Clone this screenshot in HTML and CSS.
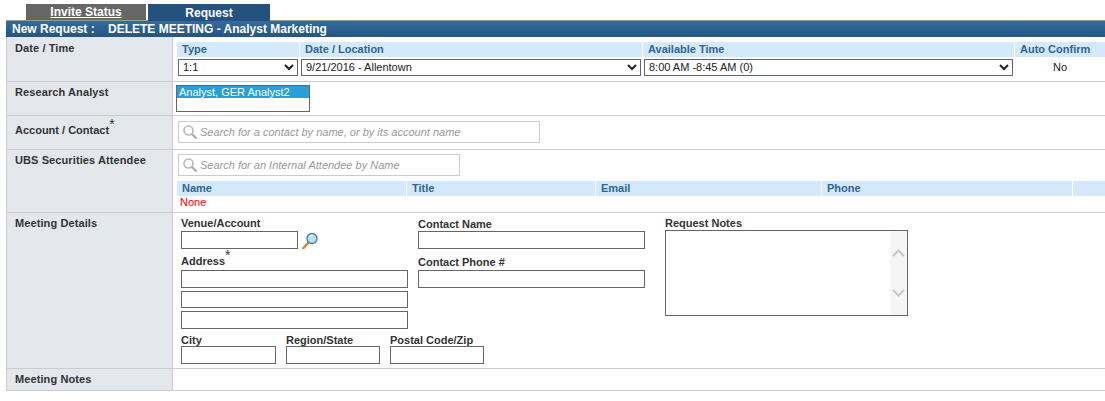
FILE: index.html
```html
<!DOCTYPE html>
<html lang="en">
<head>
  <meta charset="UTF-8">
  <title>New Request</title>
  <link rel="stylesheet" href="styles.css">
</head>
<body>
  <div class="tabs">
    <a class="tab tab-off" href="#">Invite Status</a>
    <span class="tab tab-on">Request</span>
  </div>

  <div class="panel-title">
    <span class="panel-title-left">New Request :</span>
    <span>DELETE MEETING - Analyst Marketing</span>
  </div>

  <div class="row row-date">
    <div class="label">Date / Time</div>
    <div class="cell">
      <div class="date-grid">
        <div class="col-head">Type</div>
        <div class="col-head">Date / Location</div>
        <div class="col-head">Available Time</div>
        <div class="col-head">Auto Confirm</div>
        <select class="pick"><option>1:1</option></select>
        <select class="pick"><option>9/21/2016 - Allentown</option></select>
        <select class="pick"><option>8:00 AM -8:45 AM (0)</option></select>
        <div class="auto-value">No</div>
      </div>
    </div>
  </div>

  <div class="row row-analyst">
    <div class="label">Research Analyst</div>
    <div class="cell">
      <div class="listbox"><div class="listbox-item">Analyst, GER Analyst2</div></div>
    </div>
  </div>

  <div class="row row-account">
    <div class="label">Account / Contact<sup class="req">*</sup></div>
    <div class="cell">
      <div class="search search-wide">
        <svg class="search-icon" width="16" height="16" viewBox="0 0 16 16"><circle cx="6.5" cy="6.5" r="4.5" fill="none" stroke="#b8b8b8" stroke-width="1.6"/><path d="M10 10l4.5 4.5" stroke="#b0b0b0" stroke-width="2.4"/></svg>
        <span>Search for a contact by name, or by its account name</span>
      </div>
    </div>
  </div>

  <div class="row row-attendee">
    <div class="label">UBS Securities Attendee</div>
    <div class="cell">
      <div class="search search-narrow">
        <svg class="search-icon" width="16" height="16" viewBox="0 0 16 16"><circle cx="6.5" cy="6.5" r="4.5" fill="none" stroke="#b8b8b8" stroke-width="1.6"/><path d="M10 10l4.5 4.5" stroke="#b0b0b0" stroke-width="2.4"/></svg>
        <span>Search for an Internal Attendee by Name</span>
      </div>
      <div class="attendee-grid">
        <div class="col-head">Name</div>
        <div class="col-head">Title</div>
        <div class="col-head">Email</div>
        <div class="col-head">Phone</div>
        <div class="col-head"></div>
      </div>
      <div class="none-text">None</div>
    </div>
  </div>

  <div class="row row-details">
    <div class="label">Meeting Details</div>
    <div class="cell details">
      <div class="details-left">
        <div class="field-label">Venue/Account</div>
        <div class="venue-line">
          <input class="box box-venue" type="text">
          <svg class="venue-icon" width="18" height="18" viewBox="0 0 18 18"><path d="M7.5 10.5L2.5 16" stroke="#d9822b" stroke-width="2.6" stroke-linecap="round"/><circle cx="11" cy="6.5" r="5" fill="#bfe0f7" stroke="#3f7fb5" stroke-width="1.4"/><path d="M8.5 5a3 3 0 0 1 3-1.6" fill="none" stroke="#fff" stroke-width="1.2"/></svg>
        </div>
        <div class="field-label label-address">Address<sup class="req">*</sup></div>
        <input class="box box-address" type="text">
        <input class="box box-address box-gap box-short" type="text">
        <input class="box box-address box-gap" type="text">
        <div class="city-line">
          <div><div class="field-label">City</div><input class="box box-city" type="text"></div>
          <div><div class="field-label">Region/State</div><input class="box box-state" type="text"></div>
          <div><div class="field-label">Postal Code/Zip</div><input class="box box-zip" type="text"></div>
        </div>
      </div>
      <div class="details-mid">
        <div class="field-label">Contact Name</div>
        <input class="box box-contact" type="text">
        <div class="field-label label-phone">Contact Phone #</div>
        <input class="box box-contact" type="text">
      </div>
      <div class="details-right">
        <div class="field-label">Request Notes</div>
        <div class="notes">
          <div class="notes-bar">
            <svg width="17" height="12" viewBox="0 0 17 12"><path d="M3 9l5.5-5.5L14 9" fill="none" stroke="#c8c8c8" stroke-width="2.2"/></svg>
            <svg width="17" height="12" viewBox="0 0 17 12"><path d="M3 3l5.5 5.5L14 3" fill="none" stroke="#c8c8c8" stroke-width="2.2"/></svg>
          </div>
        </div>
      </div>
    </div>
  </div>

  <div class="row row-notes">
    <div class="label">Meeting Notes</div>
    <div class="cell"></div>
  </div>
</body>
</html>
```

FILE: styles.css
```css
html, body {
  margin: 0;
  padding: 0;
}
body {
  background-color: #fff;
  font-family: "Liberation Sans", Arial, sans-serif;
  font-size: 11px;
  color: #222;
  padding-left: 6px;
  padding-top: 4px;
  overflow: hidden;
}

/* tabs */
.tabs {
  display: flex;
  gap: 2px;
  padding-left: 20px;
  height: 16px;
}
.tab {
  display: block;
  width: 120px;
  height: 16px;
  line-height: 17px;
  text-align: center;
  color: #fff;
  font-size: 12px;
  font-weight: bold;
}
.tab-off {
  background-color: #666;
  text-decoration: underline;
}
.tab-on {
  width: 122px;
  height: 17px;
  line-height: 18px;
  background-color: #24527f;
}

/* title bar */
.panel-title {
  display: flex;
  height: 16px;
  line-height: 17px;
  border-top: 1px solid #999;
  padding-left: 6px;
  background: linear-gradient(#346a9f, #255580);
  color: #fff;
  font-size: 12px;
  font-weight: bold;
}
.panel-title-left {
  width: 96px;
}

/* form rows */
.row {
  display: flex;
  box-sizing: border-box;
  border-bottom: 1px solid #ccc;
}
.row-date { height: 45px; }
.row-analyst { height: 34px; }
.row-account { height: 34px; }
.row-attendee { height: 63px; }
.row-details { height: 156px; }
.row-notes { height: 22px; }

.label {
  box-sizing: border-box;
  width: 167px;
  flex: none;
  padding: 4px 0 0 8px;
  background-color: #e4e7ec;
  border-left: 1px solid #ccc;
  border-right: 1px solid #ccc;
  font-weight: bold;
  color: #333;
  letter-spacing: 0.1px;
}
.row-date .label { padding-top: 5px; }
.row-account .label {
  padding-top: 8px;
  letter-spacing: 0;
}
.req {
  font-size: 14px;
  font-weight: normal;
  line-height: 0;
}
.cell {
  flex: 1;
  min-width: 0;
}

/* date / time */
.date-grid {
  display: grid;
  grid-template-columns: 122px 342px 371px 90px;
  column-gap: 1px;
  row-gap: 2px;
  padding: 5px 0 0 4px;
}
.col-head {
  height: 15px;
  line-height: 15px;
  padding-left: 5px;
  background-color: #d5e9fc;
  color: #2f6492;
  font-weight: bold;
}
.pick {
  box-sizing: border-box;
  width: calc(100% - 2px);
  height: 17px;
  margin-left: 1px;
  padding: 0 0 2px;
  border: 1px solid #666;
  border-radius: 0;
  background-color: #fff;
  font-family: inherit;
  font-size: 11px;
  color: #222;
}
.auto-value {
  line-height: 17px;
  text-align: center;
  color: #222;
}

/* analyst list */
.listbox {
  box-sizing: border-box;
  width: 134px;
  height: 27px;
  margin: 3px 0 0 3px;
  border: 1px solid #666;
}
.listbox-item {
  height: 12px;
  line-height: 12px;
  padding-left: 2px;
  background-color: #27a0da;
  color: #fff;
}

/* search boxes */
.search {
  box-sizing: border-box;
  display: flex;
  align-items: center;
  height: 22px;
  margin-left: 5px;
  padding-left: 3px;
  border: 1px solid #ccc;
  color: #999;
  font-style: italic;
}
.search-icon {
  margin-right: 2px;
}
.search-wide {
  width: 362px;
  margin-top: 5px;
}
.search-narrow {
  width: 282px;
  margin-top: 4px;
}
.attendee-grid {
  display: grid;
  grid-template-columns: 229px 188px 225px 250px 1fr;
  column-gap: 1px;
  margin: 5px 0 0 4px;
}
.none-text {
  margin-left: 7px;
  line-height: 13px;
  color: #f00;
}

/* meeting details */
.details {
  display: flex;
  padding: 4px 0 0 8px;
}
.details-left { width: 237px; }
.details-mid { width: 247px; }
.field-label {
  height: 13px;
  line-height: 13px;
  font-weight: bold;
  color: #333;
}
.box {
  display: block;
  box-sizing: border-box;
  height: 18px;
  margin: 0;
  padding: 0;
  border: 1px solid #666;
  border-radius: 0;
  background-color: #fff;
}
.box-venue { width: 117px; }
.venue-line {
  display: flex;
  align-items: flex-start;
  height: 18px;
  margin-top: 1px;
}
.venue-icon {
  margin: 1px 0 0 3px;
}
.label-address { margin-top: 6px; height: 14px; }
.box-address { width: 227px; margin-top: 1px; }
.box-gap { margin-top: 3px; }
.box-short { height: 17px; }
.city-line {
  display: flex;
  gap: 10px;
  margin-top: 5px;
}
.city-line .field-label { height: 12px; }
.box-city { width: 95px; }
.box-state, .box-zip { width: 94px; }

.details-mid { padding-top: 1px; }
.box-contact { width: 227px; }
.label-phone { margin-top: 7px; margin-bottom: 1px; }

.notes {
  box-sizing: border-box;
  display: flex;
  justify-content: flex-end;
  width: 243px;
  height: 86px;
  border: 1px solid #666;
}
.notes-bar {
  display: flex;
  flex-direction: column;
  justify-content: center;
  gap: 28px;
  width: 17px;
  background-color: #f5f5f5;
}
```
